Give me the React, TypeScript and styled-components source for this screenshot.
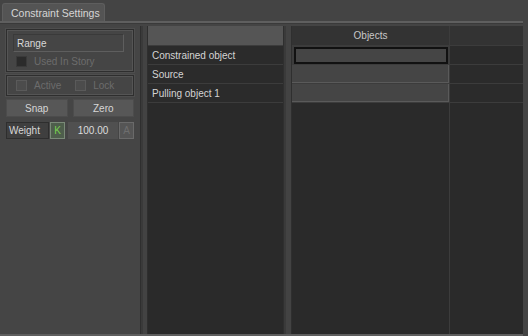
import React from "react";
import styled, { createGlobalStyle } from "styled-components";

const Global = createGlobalStyle`
  body {
    margin: 0;
    background: #444444;
  }
`;

const Window = styled.div`
  width: 528px;
  height: 336px;
  background: #444444;
  font-family: "Liberation Sans", Arial, sans-serif;
  font-size: 10px;
  color: #d2d2d2;
  display: flex;
  flex-direction: column;
  overflow: hidden;
`;

const TabBar = styled.div`
  height: 21px;
  display: flex;
  align-items: flex-end;
  padding-left: 2px;
`;

const Tab = styled.div`
  height: 18px;
  width: 103px;
  padding-left: 8px;
  box-sizing: border-box;
  display: flex;
  align-items: center;
  white-space: nowrap;
  background: #545454;
  border: 1px solid #5e5e5e;
  border-bottom: none;
  border-radius: 3px 3px 0 0;
  color: #d6d6d6;
  font-size: 10.5px;
`;

const Rule = styled.div`
  width: 523px;
  height: 2px;
  background: #5f5f5f;
  border-bottom: 1px solid #3a3a3a;
`;

const Body = styled.div`
  flex: 1;
  display: flex;
  width: 523px;
  padding-top: 2px;
  border-bottom: 2px solid #5e5e5e;
`;

const LeftPanel = styled.div`
  width: 128px;
  padding: 3px 6px 0 6px;
  display: flex;
  flex-direction: column;
  gap: 3px;
  background: #454545;
`;

const Group = styled.div<{ $pad?: string }>`
  border: 1px solid #2e2e2e;
  box-shadow: inset 0 0 0 1px #555555, 0 0 0 1px #4e4e4e;
  padding: ${(p) => p.$pad || "3px 6px"};
  display: flex;
  flex-direction: column;
  gap: 4px;
`;

const Field = styled.div`
  height: 16px;
  border: 1px solid #5e5e5e;
  border-top-color: #3a3a3a;
  border-left-color: #3a3a3a;
  padding-left: 3px;
  display: flex;
  align-items: center;
  color: #d8d8d8;
`;

const CheckRow = styled.div`
  display: flex;
  align-items: center;
  gap: 14px;
`;

const Check = styled.label<{ $indent?: number }>`
  display: flex;
  align-items: center;
  gap: 7px;
  margin-left: ${(p) => p.$indent || 0}px;
  color: #6c6c6c;
`;

const Box = styled.span<{ $dark?: boolean }>`
  width: 11px;
  height: 11px;
  background: ${(p) => (p.$dark ? "#2b2b2b" : "#4c4c4c")};
  border: 1px solid ${(p) => (p.$dark ? "#3a3a3a" : "#5a5a5a")};
  box-sizing: border-box;
`;

const ButtonRow = styled.div`
  display: flex;
  gap: 5px;
`;

const Button = styled.div`
  flex: 1;
  height: 16px;
  display: flex;
  align-items: center;
  justify-content: center;
  background: #575757;
  border: 1px solid #4c4c4c;
  color: #d6d6d6;
`;

const WeightRow = styled.div`
  margin-top: 2px;
  height: 17px;
  display: flex;
  align-items: stretch;
  gap: 1px;
`;

const WeightLabel = styled.div`
  width: 39px;
  display: flex;
  align-items: center;
  padding-left: 2px;
  border: 1px solid #2e2e2e;
  background: #3f3f3f;
  color: #d8d8d8;
`;

const KeyButton = styled.div<{ $on?: boolean }>`
  width: 13px;
  display: flex;
  align-items: center;
  justify-content: center;
  background: ${(p) => (p.$on ? "#4e5e4c" : "#555555")};
  border: 1px solid ${(p) => (p.$on ? "#7a8a78" : "#6a6a6a")};
  color: ${(p) => (p.$on ? "#78d050" : "#6e6e6e")};
`;

const NumberBox = styled.div`
  flex: 1;
  margin-left: 2px;
  display: flex;
  align-items: center;
  justify-content: center;
  background: #505050;
  color: #dcdcdc;
`;

const Splitter = styled.div<{ $w: number }>`
  width: ${(p) => p.$w}px;
  display: flex;
  justify-content: space-between;
  background: #434343;
  border-left: 1px solid #2f2f2f;
  border-right: 1px solid #2f2f2f;
  box-sizing: border-box;
  &::before {
    content: "";
    width: 2px;
    background: #3a3a3a;
  }
`;

const Sheet = styled.div<{ $w: number }>`
  width: ${(p) => p.$w}px;
  background: #2a2a2a;
  display: flex;
  flex-direction: column;
`;

const Grid = styled.div<{ $cols: string }>`
  display: grid;
  grid-template-columns: ${(p) => p.$cols};
  grid-template-rows: 19px;
  grid-auto-rows: 18px;
  column-gap: 1px;
  background: #3c3c3c;
  padding-bottom: 1px;
  row-gap: 1px;
`;

const Header = styled.div<{ $light?: boolean }>`
  background: ${(p) => (p.$light ? "#555555" : "#333333")};
  display: flex;
  align-items: center;
  justify-content: center;
  color: #c8c8c8;
`;

const Cell = styled.div<{ $tone?: "dark" | "light" | "selected" }>`
  display: flex;
  align-items: center;
  padding-left: 4px;
  color: #d4d4d4;
  box-sizing: border-box;
  background: ${(p) =>
    p.$tone === "light" || p.$tone === "selected" ? "#454545" : "#2b2b2b"};
  border: ${(p) => (p.$tone === "selected" ? "2px solid #111111" : "none")};
  border-right: ${(p) => (p.$tone === "light" ? "1px solid #5a5a5a" : undefined)};
  border-bottom: ${(p) => (p.$tone === "light" ? "1px solid #5a5a5a" : undefined)};
  margin: ${(p) => (p.$tone === "selected" ? "1px 1px 0 2px" : "0")};
`;

const Filler = styled.div<{ $cols: string }>`
  flex: 1;
  display: grid;
  grid-template-columns: ${(p) => p.$cols};
  column-gap: 1px;
  background: #3c3c3c;
  & > div {
    background: #2a2a2a;
  }
`;

const rows = ["Constrained object", "Source", "Pulling object 1"];

export default function App() {
  return (
    <Window>
      <Global />
      <TabBar>
        <Tab>Constraint Settings</Tab>
      </TabBar>
      <Rule />
      <Body>
        <LeftPanel>
          <Group $pad="4px 9px 4px 6px">
            <Field>Range</Field>
            <Check $indent={3}>
              <Box $dark />
              Used In Story
            </Check>
          </Group>
          <Group $pad="4px 9px">
            <CheckRow>
              <Check>
                <Box />
                Active
              </Check>
              <Check>
                <Box />
                Lock
              </Check>
            </CheckRow>
          </Group>
          <ButtonRow>
            <Button>Snap</Button>
            <Button>Zero</Button>
          </ButtonRow>
          <WeightRow>
            <WeightLabel>Weight</WeightLabel>
            <KeyButton $on>K</KeyButton>
            <NumberBox>100.00</NumberBox>
            <KeyButton>A</KeyButton>
          </WeightRow>
        </LeftPanel>
        <Splitter $w={8} />
        <Sheet $w={135}>
          <Grid $cols="1fr">
            <Header $light />
            {rows.map((r) => (
              <Cell key={r}>{r}</Cell>
            ))}
          </Grid>
          <Filler $cols="1fr">
            <div />
          </Filler>
        </Sheet>
        <Splitter $w={9} />
        <Sheet $w={231}>
          <Grid $cols="157px 1fr">
            <Header>Objects</Header>
            <Header />
            <Cell $tone="selected" />
            <Cell />
            <Cell $tone="light" />
            <Cell />
            <Cell $tone="light" />
            <Cell />
          </Grid>
          <Filler $cols="157px 1fr">
            <div />
            <div />
          </Filler>
        </Sheet>
      </Body>
    </Window>
  );
}
